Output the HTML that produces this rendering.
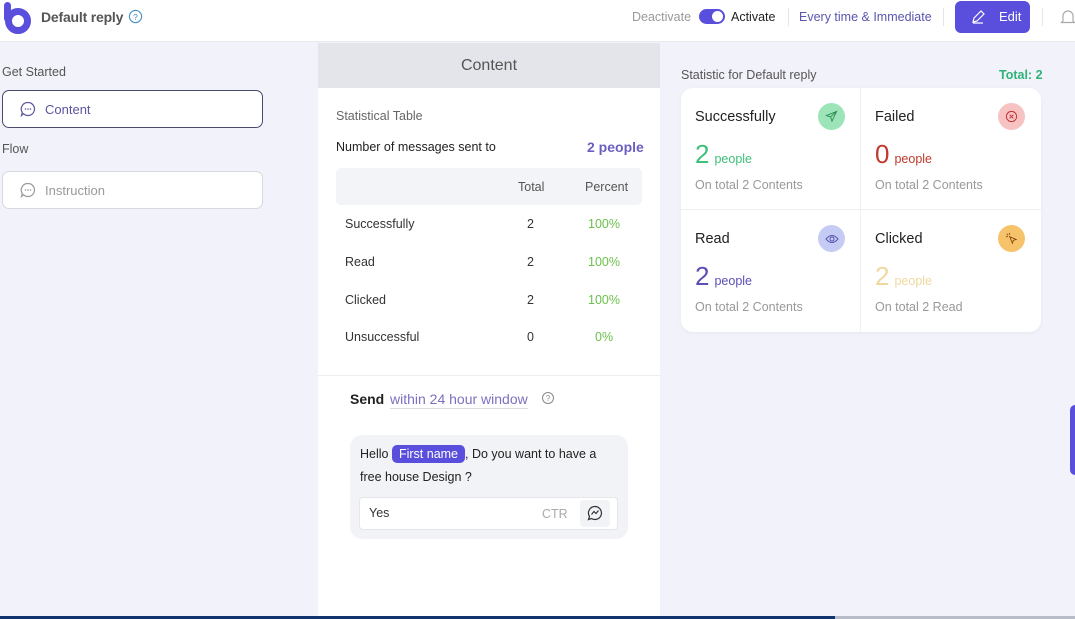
<!DOCTYPE html>
<html><head><meta charset="utf-8"><style>
*{box-sizing:border-box;margin:0;padding:0}
body{width:1075px;height:619px;overflow:hidden;background:#f2f2fa;font-family:"Liberation Sans",sans-serif;position:relative;color:#222}
.hdr{position:absolute;left:0;top:0;width:1075px;height:42px;background:#fff;border-bottom:1px solid #e8e8ee}
.abs{position:absolute;white-space:nowrap}
.card{position:absolute;left:2px;width:261px;height:38px;background:#fff;border-radius:7px;font-size:13px;display:flex;align-items:center;padding-left:17px}
.card svg{margin-right:9px}
.center{position:absolute;left:318px;top:43px;width:342px;height:573px;background:#fff}
.ch{height:45px;background:#e3e5ea;text-align:center;line-height:45px;font-size:16px;color:#555}
.row{position:absolute;left:336px;width:306px;height:38px;font-size:12.5px;color:#333}
.row span{position:absolute;top:12px}
.stat{position:absolute;left:681px;top:88px;width:360px;height:244px;background:#fff;border-radius:12px;box-shadow:0 1px 4px rgba(0,0,0,.05)}
.cell{position:absolute;width:180px;height:122px}
.cell .t{position:absolute;left:14px;top:21px;font-size:14.5px;color:#222}
.cell .n{position:absolute;left:14px;top:51px;font-size:26px}
.cell .n small{font-size:12.5px;margin-left:5px}
.cell .s{position:absolute;left:14px;top:90px;font-size:12.5px;color:#999}
.cell .ic{position:absolute;left:137px;top:15px;width:27px;height:27px;border-radius:50%;display:flex;align-items:center;justify-content:center}
</style></head><body>
<div class="hdr"></div>
<svg class="abs" style="left:3px;top:2px" width="30" height="32" viewBox="0 0 30 32"><rect x="1" y="0" width="7" height="20" rx="3.5" fill="#5a4fdc"/><circle cx="15" cy="19" r="9.5" fill="none" stroke="#5a4fdc" stroke-width="7"/></svg>
<div class="abs" style="left:41px;top:9px;font-size:14px;font-weight:bold;color:#555;letter-spacing:-0.2px">Default reply</div>
<svg class="abs" style="left:128px;top:9px" width="15" height="15" viewBox="0 0 16 16"><circle cx="8" cy="8" r="6.5" fill="none" stroke="#4a90c8" stroke-width="1.2"/><text x="8" y="11.5" font-size="9" text-anchor="middle" fill="#4a90c8" font-family="Liberation Sans">?</text></svg>
<div class="abs" style="left:632px;top:10px;font-size:12.5px;color:#999">Deactivate</div>
<div class="abs" style="left:699px;top:9px;width:26px;height:15px;border-radius:8px;background:#5a4fdc"><div style="position:absolute;right:2px;top:2px;width:11px;height:11px;border-radius:50%;background:#fff"></div></div>
<div class="abs" style="left:731px;top:10px;font-size:12.5px;color:#222">Activate</div>
<div class="abs" style="left:788px;top:8px;width:1px;height:18px;background:#e5e5e5"></div>
<div class="abs" style="left:799px;top:10px;font-size:12.5px;color:#5a55b0">Every time &amp; Immediate</div>
<div class="abs" style="left:943px;top:8px;width:1px;height:18px;background:#e5e5e5"></div>
<div class="abs" style="left:955px;top:1px;width:75px;height:32px;background:#5a4fdc;border-radius:6px;color:#fff;font-size:13px;line-height:32px;padding-left:44px">Edit</div>
<svg class="abs" style="left:970px;top:9px" width="16" height="16" viewBox="0 0 16 16"><path d="M3 13l1-4 7-7 3 3-7 7z M3 14h10" fill="none" stroke="#fff" stroke-width="1.2"/></svg>
<div class="abs" style="left:1042px;top:8px;width:1px;height:18px;background:#e5e5e5"></div>
<svg class="abs" style="left:1060px;top:8px" width="15" height="18" viewBox="0 0 15 18"><path d="M3 13V8a5 5 0 0110 0v5l1.5 1.5h-13z" fill="none" stroke="#aaa" stroke-width="1.2"/></svg>

<div class="abs" style="left:2px;top:65px;font-size:12.5px;color:#555">Get Started</div>
<div class="card" style="top:90px;border:1.3px solid #4a4a70;color:#5a55a0"><svg width="16" height="16" viewBox="0 0 16 16"><path d="M8 1.5a6.5 6.5 0 11-4.5 11.2L1.5 14.5l.8-3A6.5 6.5 0 018 1.5z" fill="none" stroke="#5a55a0" stroke-width="1.2"/><circle cx="5.5" cy="8" r=".8" fill="#5a55a0"/><circle cx="8" cy="8" r=".8" fill="#5a55a0"/><circle cx="10.5" cy="8" r=".8" fill="#5a55a0"/></svg>Content</div>
<div class="abs" style="left:2px;top:142px;font-size:12.5px;color:#555">Flow</div>
<div class="card" style="top:171px;border:1px solid #d8d8e0;color:#999"><svg width="16" height="16" viewBox="0 0 16 16"><path d="M8 1.5a6.5 6.5 0 11-4.5 11.2L1.5 14.5l.8-3A6.5 6.5 0 018 1.5z" fill="none" stroke="#999" stroke-width="1.2"/><circle cx="5.5" cy="8" r=".8" fill="#999"/><circle cx="8" cy="8" r=".8" fill="#999"/><circle cx="10.5" cy="8" r=".8" fill="#999"/></svg>Instruction</div>

<div class="center"><div class="ch">Content</div>
<div style="position:absolute;left:0;top:332px;width:342px;height:1px;background:#eee"></div></div>
<div class="abs" style="left:336px;top:109px;font-size:12.5px;color:#666">Statistical Table</div>
<div class="abs" style="left:336px;top:140px;font-size:12.5px;color:#222">Number of messages sent to</div>
<div class="abs" style="left:587px;top:139px;font-size:14px;font-weight:bold;color:#6a5fc0">2 people</div>
<div class="row" style="top:168px;height:37px;background:#f3f4f7;border-radius:5px;color:#555"><span style="left:182px;top:12px">Total</span><span style="left:249px;top:12px">Percent</span></div>
<div class="row" style="top:205px"><span style="left:9px">Successfully</span><span style="left:191px">2</span><span style="left:252px;color:#6bc04a">100%</span></div>
<div class="row" style="top:243px"><span style="left:9px">Read</span><span style="left:191px">2</span><span style="left:252px;color:#6bc04a">100%</span></div>
<div class="row" style="top:281px"><span style="left:9px">Clicked</span><span style="left:191px">2</span><span style="left:252px;color:#6bc04a">100%</span></div>
<div class="row" style="top:318px"><span style="left:9px">Unsuccessful</span><span style="left:191px">0</span><span style="left:259px;color:#6bc04a">0%</span></div>
<div class="abs" style="left:350px;top:391px;font-size:14px;font-weight:bold;color:#222">Send</div>
<div class="abs" style="left:390px;top:391px;font-size:14px;color:#7a70c0;border-bottom:1px solid #ddd;padding-bottom:1px">within 24 hour window</div>
<svg class="abs" style="left:541px;top:391px" width="14" height="14" viewBox="0 0 14 14"><circle cx="7" cy="7" r="5.5" fill="none" stroke="#888" stroke-width="1"/><text x="7" y="10" font-size="8" text-anchor="middle" fill="#888" font-family="Liberation Sans">?</text></svg>
<div class="abs" style="left:350px;top:435px;width:278px;height:104px;background:#f2f3f6;border-radius:12px"></div>
<div class="abs" style="left:360px;top:447px;font-size:12.5px;color:#222">Hello <span style="background:#5a4fdc;color:#fff;padding:2px 7px;border-radius:5px">First name</span>, Do you want to have a</div>
<div class="abs" style="left:360px;top:470px;font-size:12.5px;color:#222">free house Design ?</div>
<div class="abs" style="left:359px;top:497px;width:259px;height:33px;background:#fff;border:1px solid #e5e5ea;border-radius:4px"></div>
<div class="abs" style="left:369px;top:506px;font-size:12.5px;color:#333">Yes</div>
<div class="abs" style="left:542px;top:507px;font-size:12.5px;color:#aaa">CTR</div>
<div class="abs" style="left:580px;top:500px;width:30px;height:27px;background:#f2f3f6;border-radius:4px"></div>
<svg class="abs" style="left:587px;top:505px" width="16" height="16" viewBox="0 0 16 16"><path d="M8 1.5a6.5 6.5 0 11-3.5 12L1.5 14.5l1-3A6.5 6.5 0 018 1.5z" fill="none" stroke="#333" stroke-width="1.2"/><path d="M4.5 9.5l2.5-3 2 2 2.5-3" fill="none" stroke="#333" stroke-width="1.2"/></svg>

<div class="abs" style="left:681px;top:68px;font-size:12.5px;color:#555">Statistic for Default reply</div>
<div class="abs" style="left:999px;top:68px;font-size:12.5px;font-weight:bold;color:#2fb37a">Total: 2</div>
<div class="stat">
<div style="position:absolute;left:179px;top:0;width:1px;height:244px;background:#f0f0f2"></div>
<div style="position:absolute;left:0;top:121px;width:360px;height:1px;background:#f0f0f2"></div>
<div class="cell" style="left:0;top:0"><div class="t">Successfully</div><div class="ic" style="background:#9de5b8"><svg width="13" height="13" viewBox="0 0 14 14"><path d="M12.5 1.5L1.5 6l4.5 1.5L7.5 12z M6 7.5l6.5-6" fill="none" stroke="#2a8a50" stroke-width="1"/></svg></div><div class="n" style="color:#3cc07a">2<small>people</small></div><div class="s">On total 2 Contents</div></div>
<div class="cell" style="left:180px;top:0"><div class="t">Failed</div><div class="ic" style="background:#f6c2c2"><svg width="13" height="13" viewBox="0 0 14 14"><circle cx="7" cy="7" r="5.5" fill="none" stroke="#c03030" stroke-width="1"/><path d="M5 5l4 4M9 5l-4 4" stroke="#c03030" stroke-width="1"/></svg></div><div class="n" style="color:#c0392b">0<small>people</small></div><div class="s">On total 2 Contents</div></div>
<div class="cell" style="left:0;top:122px"><div class="t">Read</div><div class="ic" style="background:#c4ccf6"><svg width="14" height="12" viewBox="0 0 14 12"><path d="M1 6q6-7 12 0q-6 7-12 0z" fill="none" stroke="#5a55b0" stroke-width="1"/><circle cx="7" cy="6" r="2" fill="none" stroke="#5a55b0" stroke-width="1"/></svg></div><div class="n" style="color:#5a4fb8">2<small>people</small></div><div class="s">On total 2 Contents</div></div>
<div class="cell" style="left:180px;top:122px"><div class="t">Clicked</div><div class="ic" style="background:#f7c36a"><svg width="13" height="13" viewBox="0 0 14 14"><path d="M5 5l7 3-3 1-1 3z M2 2l1.5 1.5M5 1v2M1 5h2" fill="none" stroke="#8a4a10" stroke-width="1"/></svg></div><div class="n" style="color:#f0d8a0">2<small>people</small></div><div class="s">On total 2 Read</div></div>
</div>
<div class="abs" style="left:1070px;top:405px;width:8px;height:70px;background:#5a4fdc;border-radius:5px 0 0 5px"></div>
<div class="abs" style="left:0;top:616px;width:835px;height:3px;background:#12346e"></div>
<div class="abs" style="left:835px;top:616px;width:240px;height:3px;background:#b8bcc8"></div>
</body></html>
